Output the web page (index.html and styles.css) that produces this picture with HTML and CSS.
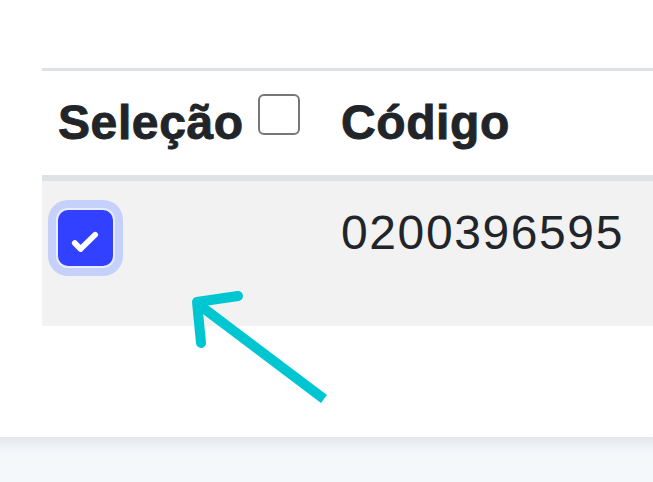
FILE: index.html
```html
<!DOCTYPE html>
<html lang="pt-BR">
<head>
<meta charset="utf-8">
<title>Seleção</title>
<link rel="stylesheet" href="styles.css">
</head>
<body>
<div class="page">
  <main class="content">
    <table class="grid">
      <thead>
        <tr>
          <th class="col-sel">Seleção <span class="cb"></span></th>
          <th>Código</th>
        </tr>
      </thead>
      <tbody>
        <tr>
          <td class="col-sel">
            <span class="cb cb-checked">
              <svg viewBox="0 0 20 20" width="55" height="55"><path d="M6.1 12l2.1 2.2l5.3-5.2" fill="none" stroke="#fff" stroke-width="2.1" stroke-linecap="round" stroke-linejoin="round"/></svg>
            </span>
          </td>
          <td class="code">0200396595</td>
        </tr>
      </tbody>
    </table>
  </main>
  <footer class="footer"></footer>
  <svg class="annotation" viewBox="0 0 653 482" width="653" height="482">
    <path d="M324 399L198 304" fill="none" stroke="#00c6d1" stroke-width="10" stroke-linecap="butt"/>
    <path d="M238 296L197 302L201 343" fill="none" stroke="#00c6d1" stroke-width="10" stroke-linecap="round" stroke-linejoin="round"/>
  </svg>
</div>
</body>
</html>
```

FILE: styles.css
```css
html, body {
  margin: 0;
  height: 100%;
  overflow: hidden;
  background: #fff;
}

body {
  font-family: "Liberation Sans", Arial, sans-serif;
  color: #212529;
}

.page {
  position: relative;
  height: 482px;
  display: flex;
  flex-direction: column;
}

.content {
  flex: 1;
  padding: 68px 0 0 42px;
}

.grid {
  border-collapse: separate;
  border-spacing: 0;
  width: 740px;
  font-size: 48px;
  line-height: 72px;
  border-top: 3px solid #dee2e6;
}

.grid th,
.grid td {
  padding: 16px;
  text-align: left;
  vertical-align: top;
}

.grid th {
  font-weight: 700;
  border-bottom: 6px solid #dee2e6;
  white-space: nowrap;
  letter-spacing: 0.6px;
  -webkit-text-stroke: 0.9px #212529;
}

.grid td {
  background: #f2f2f2;
}

.col-sel {
  width: 251px;
}

.code {
  letter-spacing: 1.6px;
}

.cb {
  display: inline-block;
  box-sizing: border-box;
  width: 42px;
  height: 41px;
  border: 2px solid #777;
  border-radius: 6px;
  background: #fff;
  margin-bottom: 4px;
  vertical-align: baseline;
  -webkit-text-stroke: 0;
}

.cb-checked {
  display: block;
  width: 55px;
  height: 56px;
  border: none;
  border-radius: 10px;
  background: #3240ff;
  margin: 13px 0 44px 0;
  box-shadow: 0 0 0 2px #e9edff, 0 0 0 10px #c6d1fb;
}

.cb-checked svg {
  display: block;
}

.footer {
  height: 45px;
  background: linear-gradient(#e3e6ea, #f1f4f8 12px, #f5f8fb 20px);
}

.annotation {
  position: absolute;
  left: 0;
  top: 0;
  pointer-events: none;
}
```
